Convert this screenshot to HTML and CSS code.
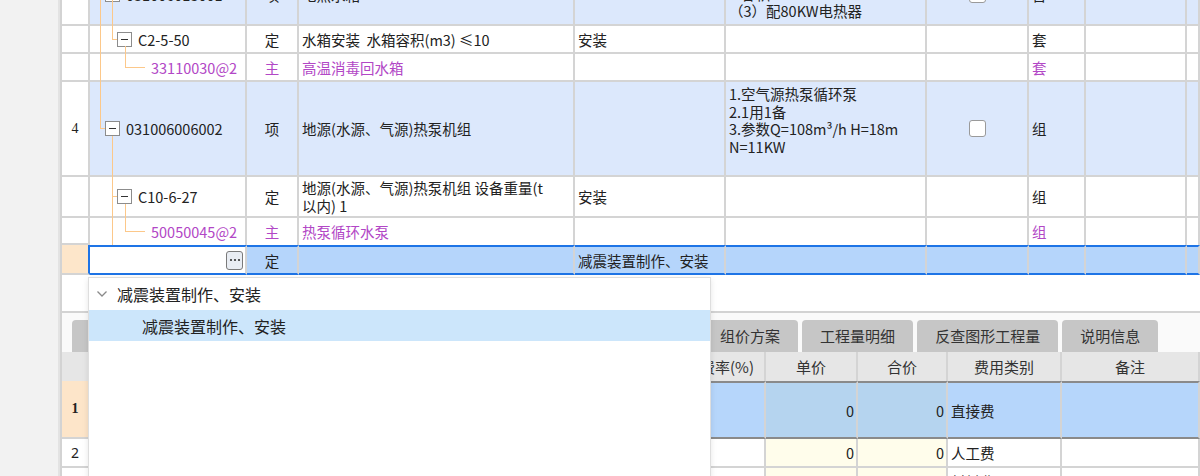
FILE: index.html
```html
<!DOCTYPE html>
<html lang="zh-CN">
<head>
    <meta charset="UTF-8">
    <title>分部分项</title>
    <link rel="stylesheet" href="styles.css">
</head>
<body>
<div class="app">
    <div class="gutter"></div>
    <div class="main">
        <div class="tree-grid">
            <div class="row blue r-h62">
                <div class="c num">3</div>
                <div class="c code lvl1"><span class="box"></span>031006015001</div>
                <div class="c type">项</div>
                <div class="c">电热水箱</div>
                <div class="c"></div>
                <div class="c feat">1.电热水箱<br>2.容积3m³<br>（3）配80KW电热器</div>
                <div class="c check"><span class="cb"></span></div>
                <div class="c">台</div>
                <div class="c"></div>
                <div class="c"></div>
            </div>
            <div class="row r-h28">
                <div class="c num"></div>
                <div class="c code lvl2"><span class="box"></span>C2-5-50</div>
                <div class="c type">定</div>
                <div class="c">水箱安装&nbsp; 水箱容积(m3) ≤10</div>
                <div class="c">安装</div>
                <div class="c"></div>
                <div class="c"></div>
                <div class="c">套</div>
                <div class="c"></div>
                <div class="c"></div>
            </div>
            <div class="row r-h28 pur">
                <div class="c num"></div>
                <div class="c code lvl3">33110030@2</div>
                <div class="c type">主</div>
                <div class="c">高温消毒回水箱</div>
                <div class="c"></div>
                <div class="c"></div>
                <div class="c"></div>
                <div class="c">套</div>
                <div class="c"></div>
                <div class="c"></div>
            </div>
            <div class="row blue r-h95">
                <div class="c num">4</div>
                <div class="c code lvl1"><span class="box"></span>031006006002</div>
                <div class="c type">项</div>
                <div class="c">地源(水源、气源)热泵机组</div>
                <div class="c"></div>
                <div class="c feat">1.空气源热泵循环泵<br>2.1用1备<br>3.参数Q=108m³/h H=18m<br>N=11KW</div>
                <div class="c check"><span class="cb"></span></div>
                <div class="c">组</div>
                <div class="c"></div>
                <div class="c"></div>
            </div>
            <div class="row r-h41">
                <div class="c num"></div>
                <div class="c code lvl2"><span class="box"></span>C10-6-27</div>
                <div class="c type">定</div>
                <div class="c two">地源(水源、气源)热泵机组 设备重量(t<br>以内) 1</div>
                <div class="c">安装</div>
                <div class="c"></div>
                <div class="c"></div>
                <div class="c">组</div>
                <div class="c"></div>
                <div class="c"></div>
            </div>
            <div class="row r-h27 pur pre-edit">
                <div class="c num"></div>
                <div class="c code lvl3">50050045@2</div>
                <div class="c type">主</div>
                <div class="c">热泵循环水泵</div>
                <div class="c"></div>
                <div class="c"></div>
                <div class="c"></div>
                <div class="c">组</div>
                <div class="c"></div>
                <div class="c"></div>
            </div>
            <div class="row edit r-h30">
                <div class="c num"></div>
                <div class="c code editing">
                    <span class="more">
                        <svg width="12" height="4" viewBox="0 0 12 4"><circle cx="2" cy="2" r="1.1"/><circle cx="6" cy="2" r="1.1"/><circle cx="10" cy="2" r="1.1"/></svg>
                    </span>
                </div>
                <div class="c type">定</div>
                <div class="c"></div>
                <div class="c">减震装置制作、安装</div>
                <div class="c"></div>
                <div class="c"></div>
                <div class="c"></div>
                <div class="c"></div>
                <div class="c"></div>
            </div>

            <svg class="tree-lines" width="200" height="250" viewBox="62 0 200 250">
                <path d="M100.5 0V128.5H105 M112.5 0V39.5H117 M125.5 46V67.5H145 M112.5 136V245 M112.5 196.5H117 M125.5 204V231.5H145"/>
            </svg>
        </div>

        <div class="gap-area"></div>

        <div class="bottom">
            <div class="tabs">
                <div class="tab">工料机显示</div>
                <div class="tab">单价构成</div>
                <div class="tab">标准换算</div>
                <div class="tab">换算信息</div>
                <div class="tab">安装费用</div>
                <div class="tab">特征及内容</div>
                <div class="tab">组价方案</div>
                <div class="tab">工程量明细</div>
                <div class="tab">反查图形工程量</div>
                <div class="tab">说明信息</div>
            </div>
            <div class="brow bhead">
                <div class="b num"></div>
                <div class="b">序号</div>
                <div class="b">费用代号</div>
                <div class="b">名称</div>
                <div class="b">计算基数</div>
                <div class="b">基数说明</div>
                <div class="b">费率(%)</div>
                <div class="b">单价</div>
                <div class="b">合价</div>
                <div class="b">费用类别</div>
                <div class="b">备注</div>
            </div>
            <div class="brow sel">
                <div class="b num strong">1</div>
                <div class="b">1</div>
                <div class="b">A</div>
                <div class="b">直接费</div>
                <div class="b">A1+A2+A3</div>
                <div class="b">人工费+材料费+机械费</div>
                <div class="b"></div>
                <div class="b val price">0</div>
                <div class="b val price">0</div>
                <div class="b">直接费</div>
                <div class="b"></div>
            </div>
            <div class="brow">
                <div class="b num">2</div>
                <div class="b">1.1</div>
                <div class="b">A1</div>
                <div class="b">人工费</div>
                <div class="b">RGF</div>
                <div class="b">人工费</div>
                <div class="b"></div>
                <div class="b val price">0</div>
                <div class="b val price">0</div>
                <div class="b">人工费</div>
                <div class="b"></div>
            </div>
            <div class="brow">
                <div class="b num">3</div>
                <div class="b">1.2</div>
                <div class="b">A2</div>
                <div class="b">材料费</div>
                <div class="b">CLF</div>
                <div class="b">材料费</div>
                <div class="b"></div>
                <div class="b val price">0</div>
                <div class="b val price">0</div>
                <div class="b">材料费</div>
                <div class="b"></div>
            </div>
        </div>
    </div>

    <div class="dropdown">
        <div class="dd-group">
            <svg class="chev" width="10" height="6" viewBox="0 0 10 6"><polyline points="0.5,0.5 5,5 9.5,0.5"/></svg>
            减震装置制作、安装
        </div>
        <div class="dd-item">减震装置制作、安装</div>
    </div>
</div>
</body>
</html>
```

FILE: styles.css
```css
* {
    box-sizing: border-box;
}
body {
    margin: 0;
    width: 1200px;
    height: 476px;
    overflow: hidden;
    font-family: "Noto Sans CJK SC", "Noto Sans", sans-serif;
    font-size: 14.5px;
    color: #222;
    background: #fff;
}
.app {
    position: relative;
    display: flex;
    height: 476px;
}
.gutter {
    width: 60px;
    flex: none;
    background: #f2f2f2;
    border-right: 2px solid #e3e3e3;
}
.main {
    flex: 1;
    border-left: 2px solid #d3d3d3;
    overflow: hidden;
}

/* top tree grid */
.tree-grid {
    position: relative;
    margin-top: -36px;
}
.row {
    display: grid;
    grid-template-columns: 28px 157px 52px 276px 151px 201px 102px 57px 101px 1fr;
}
.r-h62 { height: 62px; }
.r-h28 { height: 28px; }
.r-h95 { height: 95px; }
.r-h41 { height: 41px; }
.r-h27 { height: 27px; }
.r-h30 { height: 30px; }
.c {
    display: flex;
    align-items: center;
    padding: 0 3px;
    border-right: 2px solid #d4d4d4;
    border-bottom: 2px solid #d4d4d4;
    white-space: nowrap;
    overflow: hidden;
}
.row.blue .c:not(.num) {
    background: #dce8fc;
}
.num {
    justify-content: center;
    padding: 0;
    font-family: "Liberation Serif", serif;
    font-size: 14px;
}
.type {
    justify-content: center;
}
.pur {
    color: #b247c6;
}
.pur .num {
    color: #222;
}
.code.lvl1 { padding-left: 15px; }
.code.lvl2 { padding-left: 27px; }
.code.lvl3 { padding-left: 61px; }
.box {
    position: relative;
    flex: none;
    width: 15px;
    height: 15px;
    margin-right: 6px;
    border: 1px solid #8c8c8c;
    background: #fff;
}
.box::after {
    content: "";
    position: absolute;
    left: 3px;
    right: 3px;
    top: 6px;
    height: 1px;
    background: #333;
}
.feat {
    align-items: flex-start;
    padding-top: 3px;
    line-height: 17.5px;
}
.two {
    line-height: 18px;
}
.check {
    justify-content: center;
}
.cb {
    width: 17px;
    height: 17px;
    border: 1.5px solid #9a9a9a;
    border-radius: 3px;
    background: #fff;
}
.pre-edit .c:not(.num) {
    border-bottom: none;
}
.edit .c {
    background: #b5d5fb;
    border-top: 2px solid #1e74e6;
    border-bottom: 2px solid #1e74e6;
}
.edit .num {
    background: #fde6ca;
    border-top: none;
    border-bottom: 2px solid #d4d4d4;
    border-right-color: #1e74e6;
}
.edit .code.editing {
    background: #fff;
    justify-content: flex-end;
    padding-right: 2px;
}
.more {
    display: flex;
    align-items: center;
    justify-content: center;
    flex: none;
    width: 17px;
    height: 19px;
    border: 1.5px solid #7a7a7a;
    border-radius: 3px;
    background: #e9edf3;
}
.more svg {
    fill: #333;
}
.tree-lines {
    position: absolute;
    left: 0;
    top: 36px;
    pointer-events: none;
}
.tree-lines path {
    fill: none;
    stroke: #fcc88a;
    stroke-width: 1;
    shape-rendering: crispEdges;
}

.gap-area {
    height: 36px;
}

/* bottom panel */
.bottom {
    border-top: 2px solid #d3d3d3;
}
.tabs {
    display: flex;
    gap: 4px;
    height: 39px;
    padding: 7px 0 0 10px;
    background: #fafafa;
}
.tab {
    flex: none;
    height: 32px;
    padding: 0 18px;
    border-radius: 4px 4px 0 0;
    background: #c6c6c6;
    color: #333;
    font-size: 15px;
    line-height: 32px;
}
.brow {
    display: grid;
    grid-template-columns: 28px 50px 100px 150px 130px 170px 76px 92px 90px 114px 1fr;
    height: 29px;
}
.b {
    display: flex;
    align-items: center;
    padding: 0 3px;
    border-right: 2px solid #d4d4d4;
    border-bottom: 2px solid #d4d4d4;
    white-space: nowrap;
    overflow: hidden;
}
.bhead .b {
    justify-content: center;
    background: #e6e6e6;
    color: #333;
    font-size: 15px;
    border-bottom: none;
}
.brow.sel {
    height: 58px;
}
.sel .b:not(.num) {
    background: #b6d6fb;
    border-top: 2px solid #8a8a8a;
    border-bottom: 2px solid #8a8a8a;
}
.sel .num {
    background: #fde5c9;
}
.b.num {
    justify-content: center;
    padding: 0;
    font-family: "Noto Sans", sans-serif;
    font-size: 14px;
}
.b.num.strong {
    font-family: "Liberation Serif", serif;
    font-weight: bold;
}
.b.val {
    justify-content: flex-end;
    padding-right: 2px;
}
.brow .b.price {
    background: #fffdeb;
}
.sel .b.price {
    background: #b5d4ef;
}

/* autocomplete popup */
.dropdown {
    position: absolute;
    left: 88px;
    top: 277px;
    width: 623px;
    height: 205px;
    background: #fff;
    border: 1px solid #dedede;
    box-shadow: 0 2px 6px rgba(0, 0, 0, 0.1);
    font-size: 16px;
    color: #222;
    z-index: 5;
}
.dd-group {
    display: flex;
    align-items: center;
    height: 32px;
    padding-left: 8px;
}
.chev {
    margin-right: 10px;
}
.chev polyline {
    fill: none;
    stroke: #8a8a8a;
    stroke-width: 1.3;
}
.dd-item {
    display: flex;
    align-items: center;
    height: 31px;
    padding-left: 53px;
    background: #cce6fb;
}
```
